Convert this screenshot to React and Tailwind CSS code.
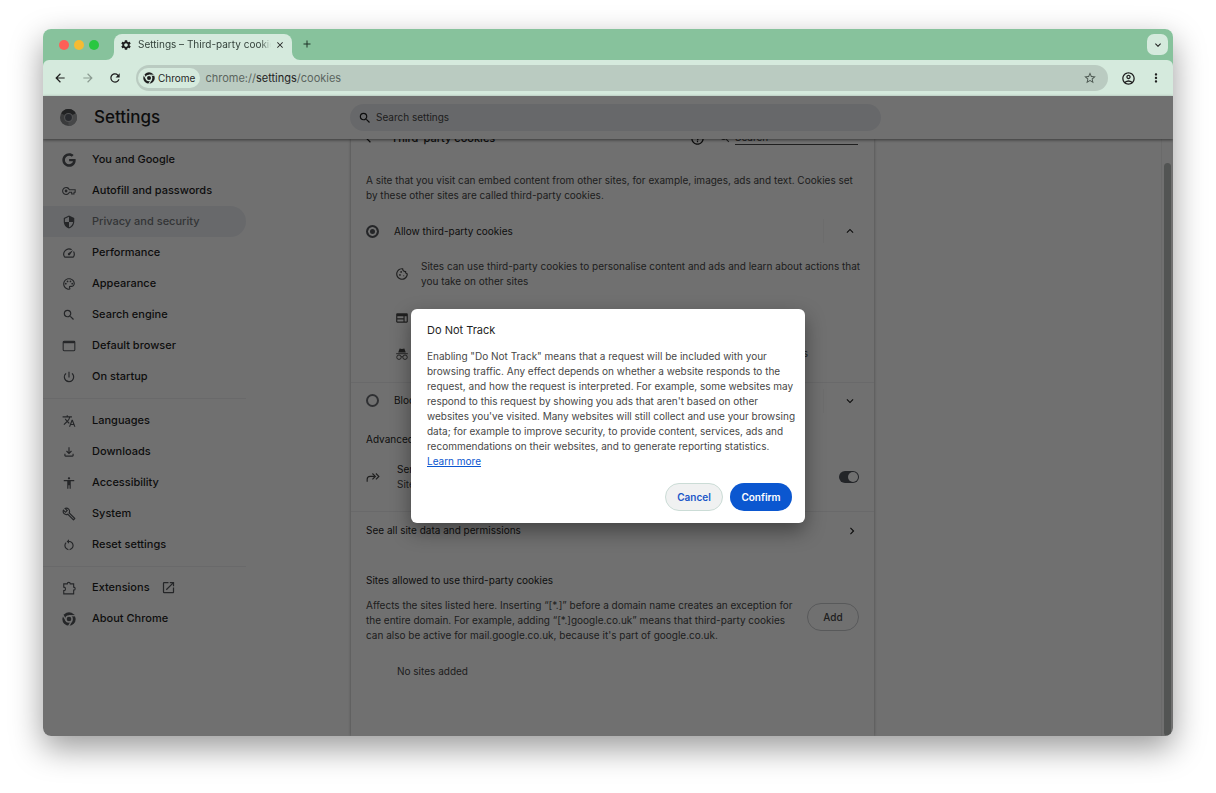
import {
  MdAccessibility,
  MdAdd,
  MdArrowBack,
  MdArrowForward,
  MdClose,
  MdHelpOutline,
  MdKeyboardArrowDown,
  MdKeyboardArrowRight,
  MdKeyboardArrowUp,
  MdMoreVert,
  MdOpenInNew,
  MdOutlineAccountCircle,
  MdOutlineBuild,
  MdOutlineCookie,
  MdOutlineFileDownload,
  MdOutlinePalette,
  MdOutlineSpeed,
  MdOutlineWeb,
  MdPowerSettingsNew,
  MdRefresh,
  MdRestartAlt,
  MdSearch,
  MdSecurity,
  MdSettings,
  MdStarBorder,
  MdTranslate,
} from "react-icons/md";
import { FaGoogle } from "react-icons/fa";

const MAIN_LINKS = [
  { label: "You and Google", icon: FaGoogle },
  { label: "Autofill and passwords", icon: KeyIcon },
  { label: "Privacy and security", icon: MdSecurity, active: true },
  { label: "Performance", icon: MdOutlineSpeed },
  { label: "Appearance", icon: MdOutlinePalette },
  { label: "Search engine", icon: MdSearch },
  { label: "Default browser", icon: BrowserIcon },
  { label: "On startup", icon: MdPowerSettingsNew },
];

const ADVANCED_LINKS = [
  { label: "Languages", icon: MdTranslate },
  { label: "Downloads", icon: MdOutlineFileDownload },
  { label: "Accessibility", icon: MdAccessibility },
  { label: "System", icon: MdOutlineBuild },
  { label: "Reset settings", icon: MdRestartAlt },
];

const FOOTER_LINKS = [
  { label: "Extensions", icon: PuzzleIcon, external: true },
  { label: "About Chrome", icon: ChromeIcon },
];

const COOKIE_NOTES = [
  {
    icon: MdOutlineCookie,
    text: "Sites can use third-party cookies to personalise content and ads and learn about actions that you take on other sites",
  },
  { icon: MdOutlineWeb, text: "Sites can use them to improve your browsing experience" },
  { icon: IncognitoIcon, text: "If you're in Incognito mode, Chrome blocks third-party cookies from all other sites" },
];

function KeyIcon({ className }) {
  return (
    <svg viewBox="0 0 24 24" className={className} fill="none" stroke="currentColor" strokeWidth="1.8">
      <path d="M12.6 9.8h10v4.4h-2v3h-4v-3h-4a6 6 0 1 1 0-4.4z" />
      <circle cx="7" cy="12" r="2.4" fill="currentColor" stroke="none" />
    </svg>
  );
}

function BrowserIcon({ className }) {
  return (
    <svg viewBox="0 0 24 24" className={className} fill="none" stroke="currentColor" strokeWidth="1.8">
      <rect x="2" y="4" width="20" height="16" rx="1.5" />
      <path d="M2 5.5h20" strokeWidth="3.5" />
    </svg>
  );
}

function PuzzleIcon({ className }) {
  return (
    <svg viewBox="0 0 24 24" className={className} fill="none" stroke="currentColor" strokeWidth="1.9">
      <path d="M3 5h6a2.6 2.6 0 0 1 5.2 0H20v5.5a2.6 2.6 0 0 1 0 5.2V22H3v-5.5a3 3 0 0 0 0-6z" />
    </svg>
  );
}

function ChromeIcon({ className }) {
  return (
    <svg viewBox="0 0 24 24" className={className}>
      <mask id="chrome-gaps">
        <circle cx="12" cy="12" r="11.5" fill="white" />
        <circle cx="12" cy="12" r="6.6" fill="black" />
        <g stroke="black" strokeWidth="2.2">
          <path d="M12 6.4h11" />
          <path d="M12 6.4h11" transform="rotate(120 12 12)" />
          <path d="M12 6.4h11" transform="rotate(240 12 12)" />
        </g>
        <circle cx="12" cy="12" r="4" fill="white" />
      </mask>
      <rect width="24" height="24" fill="currentColor" mask="url(#chrome-gaps)" />
    </svg>
  );
}

function IncognitoIcon({ className }) {
  return (
    <svg viewBox="0 0 24 24" className={className} fill="none" stroke="currentColor" strokeWidth="1.6">
      <path d="M8 2.5l4 1 4-1 2.500 7h-13z" fill="currentColor" stroke="none" />
      <path d="M2 11.5h20" />
      <circle cx="6.8" cy="17.5" r="3.8" />
      <circle cx="17.2" cy="17.5" r="3.8" />
      <path d="M10.5 17c1-.9 2-.9 3 0" />
    </svg>
  );
}

function SendIcon({ className }) {
  return (
    <svg viewBox="0 0 24 24" className={className} fill="none" stroke="currentColor" strokeWidth="2">
      <path d="M2 20v-4c0-3 2-5 5-5h8" />
      <path d="M11 6l5 5-5 5" />
      <path d="M17 6l5 5-5 5" />
    </svg>
  );
}

function SettingsLogo({ className }) {
  return (
    <svg viewBox="0 0 24 24" className={className}>
      <circle cx="12" cy="12" r="12" fill="#85878a" />
      <path d="M12 12L1.600 6A12 12 0 0 1 22.400 6z" fill="#4c4e50" />
      <path d="M12 12l10.400-6A12 12 0 0 1 12 24z" fill="#a0a2a5" />
      <circle cx="12" cy="12" r="6.4" fill="#b8babd" />
      <circle cx="12" cy="12" r="4.8" fill="#5b6069" />
    </svg>
  );
}

function NavGroup({ links }) {
  return (
    <ul>
      {links.map(({ label, icon: Icon, active, external }) => (
        <li key={label}>
          <a
            href="#"
            className={`flex h-[31px] items-center rounded-r-full pl-[19px] text-[11px] font-medium ${
              active ? "bg-[#edf0f4] text-[#75787c]" : "text-[#1f1f1f]"
            }`}
          >
            <Icon className="size-3.5 shrink-0 text-[#54575c]" />
            <span className="ml-4">{label}</span>
            {external && <MdOpenInNew className="ml-[11px] size-[15px] text-[#54575c]" />}
          </a>
        </li>
      ))}
    </ul>
  );
}

function TabFoot({ className }) {
  return (
    <svg viewBox="0 0 8 8" className={`size-2 shrink-0 self-end ${className}`}>
      <path d="M8 0v8H0a8 8 0 0 0 8-8z" fill="#d5eadd" />
    </svg>
  );
}

function TabStrip() {
  return (
    <div className="flex h-[31px] items-end bg-[#87c29c]">
      <div className="flex h-full items-center gap-[5px] pl-4">
        <span className="size-2.5 rounded-full bg-[#fe5f57]" />
        <span className="size-2.5 rounded-full bg-[#f5bb33]" />
        <span className="size-2.5 rounded-full bg-[#29c740]" />
      </div>
      <TabFoot className="ml-[7px]" />
      <div className="flex h-[26px] w-[178px] items-center rounded-t-lg bg-[#d5eadd] pl-1.5 pr-[7px] pb-[5px]">
        <MdSettings className="size-3 shrink-0 text-[#1f1f1f]" />
        <span className="ml-1.5 flex-1 overflow-hidden whitespace-nowrap text-[10px] text-[#33413a] [mask-image:linear-gradient(to_right,black_92%,transparent)]">
          Settings – Third-party cookies
        </span>
        <button type="button" aria-label="Close tab" className="ml-1 text-[#1f1f1f]">
          <MdClose className="size-2.5" />
        </button>
      </div>
      <TabFoot className="-scale-x-100" />
      <button type="button" aria-label="New tab" className="mb-2.5 ml-px text-[#1f3327]">
        <MdAdd className="size-3" />
      </button>
      <button
        type="button"
        aria-label="Search tabs"
        className="mb-[5px] ml-auto mr-[5px] flex size-[21px] items-center justify-center rounded-[7px] bg-[#d5eadd] text-[#1f1f1f]"
      >
        <MdKeyboardArrowDown className="size-3" />
      </button>
    </div>
  );
}

function Toolbar() {
  return (
    <div className="bg-[#87c29c]">
      <div className="flex h-9 items-center rounded-t-md bg-[#d5eadd] px-2.5 text-[#1f1f1f]">
        <button type="button" aria-label="Back">
          <MdArrowBack className="size-3.5" />
        </button>
        <button type="button" aria-label="Forward" className="ml-3.5 text-[#8b9b91]">
          <MdArrowForward className="size-3.5" />
        </button>
        <button type="button" aria-label="Reload" className="ml-[13px]">
          <MdRefresh className="size-3.5" />
        </button>
        <div className="ml-3.5 flex h-[26px] flex-1 items-center rounded-full bg-[#bacbc1] pl-0.5 pr-[11px]">
          <span className="flex h-5 items-center gap-[3px] rounded-full bg-[#d5eadd] px-[5px] text-[10px]">
            <ChromeIcon className="size-3" />
            Chrome
          </span>
          <span className="ml-[5px] text-[11px] text-[#5a655f]">
            chrome://<span className="text-[#1f1f1f]">settings</span>/cookies
          </span>
          <button type="button" aria-label="Bookmark this tab" className="ml-auto text-[#4d5952]">
            <MdStarBorder className="size-3.5" />
          </button>
        </div>
        <button type="button" aria-label="Profile" className="ml-[13px]">
          <MdOutlineAccountCircle className="size-[15px]" />
        </button>
        <button type="button" aria-label="Menu" className="ml-[13px]">
          <MdMoreVert className="size-3.5" />
        </button>
      </div>
    </div>
  );
}

function SettingsHeader() {
  return (
    <header className="relative z-10 flex h-[43px] shrink-0 items-center bg-white shadow-[0_1px_3px_rgba(0,0,0,0.5)]">
      <div className="flex w-[307px] shrink-0 items-center gap-[17px] pl-[17px]">
        <SettingsLogo className="size-[17px]" />
        <h1 className="text-[17px] font-medium text-[#1f1f1f]">Settings</h1>
      </div>
      <label className="flex h-[27px] max-w-[531px] flex-1 items-center gap-1 rounded-full bg-[#ebedf2] pl-2 text-[#474747]">
        <MdSearch className="size-3.5 text-[#1f1f1f]" />
        <input
          type="search"
          placeholder="Search settings"
          aria-label="Search settings"
          className="flex-1 bg-transparent text-[10px] outline-none placeholder:text-[#474747]"
        />
      </label>
    </header>
  );
}

function CookiesCard() {
  return (
    <section className="flex max-w-[523px] flex-1 flex-col bg-white text-[10px] leading-[15px] text-[#474747] shadow-[0_0_3px_rgba(0,0,0,0.35)]">
      {/* scrolled under the page header */}
      <div className="-mt-[15px] flex h-7 shrink-0 items-center pl-3 pr-4 text-[#1f1f1f]">
        <MdArrowBack className="size-3.5" />
        <h2 className="ml-3.5 text-[11px] font-medium">Third-party cookies</h2>
        <MdHelpOutline className="ml-auto size-[15px]" />
        <label className="ml-3.5 flex items-center gap-1">
          <MdSearch className="size-3 text-[#474747]" />
          <input
            type="search"
            placeholder="Search"
            aria-label="Search cookies"
            className="h-3.5 w-[123px] border-b border-[#474747] bg-transparent text-[10px] outline-none placeholder:text-[#474747]"
          />
        </label>
      </div>

      <p className="px-[15px] pt-[21px]">
        A site that you visit can embed content from other sites, for example, images, ads and text. Cookies set by
        these other sites are called third-party cookies.
      </p>

      <div className="mt-2.5 flex h-9 items-center pl-[15px] pr-[17px] text-[#1f1f1f]">
        <label className="flex items-center gap-[15px]">
          <input
            type="radio"
            name="cookies"
            defaultChecked
            className="size-[13px] appearance-none rounded-full border-2 border-[#54575c] bg-[#54575c] shadow-[inset_0_0_0_2px_white]"
          />
          Allow third-party cookies
        </label>
        <span className="ml-auto h-6 border-l border-[#f6f6f6]" />
        <button type="button" aria-label="Collapse" className="ml-[19px]">
          <MdKeyboardArrowUp className="size-3.5" />
        </button>
      </div>

      <ul className="flex flex-col gap-[21px] pb-[21px] pl-11 pr-2 pt-2.5">
        {COOKIE_NOTES.map(({ icon: Icon, text }) => (
          <li key={text} className="flex items-center gap-3">
            <Icon className="size-3.5 shrink-0" />
            <span>{text}</span>
          </li>
        ))}
      </ul>

      <div className="flex h-9 items-center border-t border-[#eeeff1] pl-[15px] pr-[17px] text-[#1f1f1f]">
        <label className="flex items-center gap-[15px]">
          <input
            type="radio"
            name="cookies"
            className="size-[13px] appearance-none rounded-full border-2 border-[#6c6f74] bg-white"
          />
          Block third-party cookies
        </label>
        <span className="ml-auto h-6 border-l border-[#f6f6f6]" />
        <button type="button" aria-label="Expand" className="ml-[19px]">
          <MdKeyboardArrowDown className="size-3.5" />
        </button>
      </div>

      <h3 className="px-[15px] pt-3.5 text-[#1f1f1f]">Advanced</h3>

      <div className="mt-[15px] flex items-center px-[15px] pb-[19px]">
        <SendIcon className="size-3.5" />
        <label htmlFor="dnt" className="ml-[17px]">
          <span className="block text-[#1f1f1f]">Send a "Do Not Track" request with your browsing traffic</span>
          <span className="block">Sites use their discretion when responding to requests</span>
        </label>
        <span className="ml-auto flex h-3 w-5 items-center rounded-full bg-[#50545c] px-px has-checked:justify-end">
          <input
            id="dnt"
            type="checkbox"
            role="switch"
            defaultChecked
            className="size-2.5 appearance-none rounded-full bg-white"
          />
        </span>
      </div>

      <a
        href="#"
        className="flex h-[38px] items-center justify-between border-t border-[#eeeff1] px-[15px] text-[#1f1f1f]"
      >
        See all site data and permissions
        <MdKeyboardArrowRight className="size-3.5" />
      </a>

      <h3 className="px-[15px] pt-6 text-[#1f1f1f]">Sites allowed to use third-party cookies</h3>
      <div className="mt-2.5 flex items-start gap-2 px-[15px]">
        <p className="flex-1">
          Affects the sites listed here. Inserting “[*.]” before a domain name creates an exception for the entire
          domain. For example, adding “[*.]google.co.uk” means that third-party cookies can also be active for
          mail.google.co.uk, because it's part of google.co.uk.
        </p>
        <button
          type="button"
          className="mt-[5px] h-7 w-[52px] shrink-0 rounded-full border border-[#c8cacd] font-medium text-[#474747]"
        >
          Add
        </button>
      </div>
      <p className="pl-[46px] pt-[21px]">No sites added</p>
    </section>
  );
}

function DoNotTrackDialog() {
  return (
    <div className="absolute inset-0 z-20 flex items-center justify-center bg-black/56">
      <div
        role="dialog"
        aria-labelledby="dialog-title"
        className="w-[394px] rounded-md bg-white py-3 pl-4 shadow-[0_8px_20px_rgba(0,0,0,0.4)]"
      >
        <h2 id="dialog-title" className="text-[11px] leading-[18px] text-[#1f1f1f]">
          Do Not Track
        </h2>
        <p className="mt-2.5 pr-2 text-[10px] leading-[15px] text-[#474747]">
          Enabling "Do Not Track" means that a request will be included with your browsing traffic. Any effect depends
          on whether a website responds to the request, and how the request is interpreted. For example, some websites
          may respond to this request by showing you ads that aren't based on other websites you've visited. Many
          websites will still collect and use your browsing data; for example to improve security, to provide content,
          services, ads and recommendations on their websites, and to generate reporting statistics.
          <br />
          <a href="#" className="text-[#0b57d0] underline">
            Learn more
          </a>
        </p>
        <div className="mt-3.5 flex justify-end gap-[7px] pr-[13px] text-[10px] font-semibold">
          <button
            type="button"
            className="h-7 w-[58px] rounded-full border border-[#cbdcd6] bg-[#f0f1f1] text-[#1a56c8]"
          >
            Cancel
          </button>
          <button type="button" className="h-7 w-[62px] rounded-full bg-[#0b57d0] text-white">
            Confirm
          </button>
        </div>
      </div>
    </div>
  );
}

export default function App() {
  return (
    <div className="flex h-screen bg-white px-[43px] pb-[57px] pt-[29px] font-['Inter','Liberation_Sans',sans-serif]">
      <div className="flex flex-1 flex-col overflow-hidden rounded-lg shadow-[0_12px_32px_rgba(0,0,0,0.4)]">
        <TabStrip />
        <Toolbar />
        <div className="relative flex min-h-0 flex-1 flex-col bg-white">
          <SettingsHeader />
          <div className="flex min-h-0 flex-1 overflow-hidden">
            <div className="w-[308px] shrink-0">
              <nav className="w-[203px] pt-[5px]">
                <NavGroup links={MAIN_LINKS} />
                <hr className="my-1.5 border-[#eeeff1]" />
                <NavGroup links={ADVANCED_LINKS} />
                <hr className="mb-[5px] mt-1.5 border-[#eeeff1]" />
                <NavGroup links={FOOTER_LINKS} />
              </nav>
            </div>
            <CookiesCard />
            <div className="ml-auto flex w-3 flex-col border-l border-[#f2f2f2] pl-0.5 pt-6">
              <div className="w-[7px] flex-1 rounded-full bg-[#bcbfbd]" />
            </div>
          </div>
          <DoNotTrackDialog />
        </div>
      </div>
    </div>
  );
}
